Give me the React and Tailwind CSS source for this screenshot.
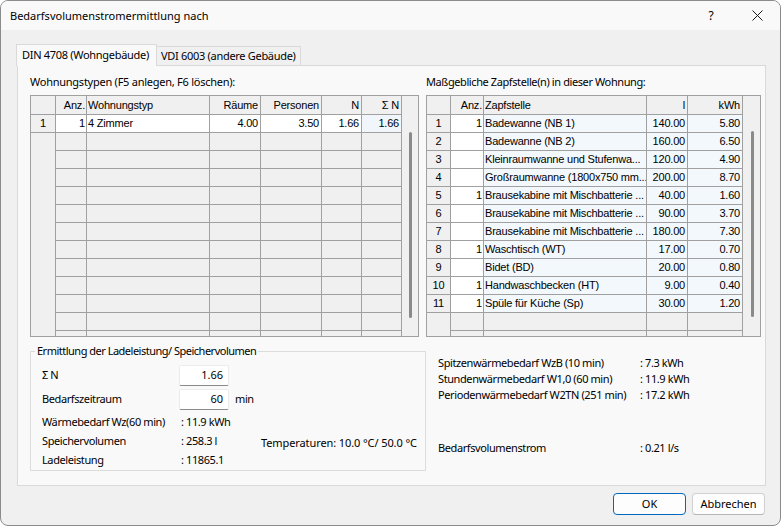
import React from "react";

const UI = { fontFamily: '"Noto Sans", "Open Sans", sans-serif' };
const GRIDF = { fontFamily: '"Liberation Sans", Arial, sans-serif' };

const LCOLS = [
  { w: "w-[25px]", a: "justify-center", label: "" },
  { w: "w-[31px]", a: "justify-end pr-[1px]", label: "Anz." },
  { w: "w-[123px]", a: "justify-start pl-[1px]", label: "Wohnungstyp" },
  { w: "w-[51px]", a: "justify-end pr-[2px]", label: "Räume" },
  { w: "w-[61px]", a: "justify-end pr-[2px]", label: "Personen" },
  { w: "w-[40px]", a: "justify-end pr-[2px]", label: "N" },
  { w: "w-[40px]", a: "justify-end pr-[2px]", label: "Σ N" },
];

const RCOLS = [
  { w: "w-[24px]", a: "justify-center", label: "" },
  { w: "w-[33px]", a: "justify-end pr-[1px]", label: "Anz." },
  { w: "w-[163px]", a: "justify-start pl-[1px]", label: "Zapfstelle" },
  { w: "w-[41px]", a: "justify-end pr-[2px]", label: "l" },
  { w: "w-[55px]", a: "justify-end pr-[2px]", label: "kWh" },
];

const LROWS = [["1", "1", "4 Zimmer", "4.00", "3.50", "1.66", "1.66"]];
const LBG = ["bg-[#f0f0f0]", "bg-white", "bg-white", "bg-white", "bg-white", "bg-white", "bg-[#f1f6fc]"];

const RROWS = [
  ["1", "1", "Badewanne (NB 1)", "140.00", "5.80"],
  ["2", "", "Badewanne (NB 2)", "160.00", "6.50"],
  ["3", "", "Kleinraumwanne und Stufenwa...", "120.00", "4.90"],
  ["4", "", "Großraumwanne (1800x750 mm...", "200.00", "8.70"],
  ["5", "1", "Brausekabine mit Mischbatterie ...", "40.00", "1.60"],
  ["6", "", "Brausekabine mit Mischbatterie ...", "90.00", "3.70"],
  ["7", "", "Brausekabine mit Mischbatterie ...", "180.00", "7.30"],
  ["8", "1", "Waschtisch (WT)", "17.00", "0.70"],
  ["9", "", "Bidet (BD)", "20.00", "0.80"],
  ["10", "1", "Handwaschbecken (HT)", "9.00", "0.40"],
  ["11", "1", "Spüle für Küche (Sp)", "30.00", "1.20"],
];
const RBG = ["bg-[#f0f0f0]", "bg-white", "bg-[#f3f8fd]", "bg-[#f3f8fd]", "bg-[#f3f8fd]"];

function Grid({ cols, rows, bgs, width, scrollW, thumbPad }) {
  const total = 13;
  const all = [];
  for (let i = 0; i < total; i++) all.push(rows[i] || null);
  return (
    <div className={`${width} h-[242px] border border-[#a0a0a0] flex overflow-hidden bg-[#f0f0f0] tracking-[-0.2px]`} style={GRIDF}>
      <div className="flex flex-col">
        <div className="flex h-[19px] shrink-0">
          {cols.map((c, i) => (
            <div
              key={i}
              className={`${c.w} h-[19px] border-r border-b border-[#a0a0a0] flex items-center ${c.a} text-[11px] text-black bg-[#f0f0f0] whitespace-nowrap overflow-hidden`}
            >
              {c.label}
            </div>
          ))}
        </div>
        {all.map((r, ri) => (
          <div key={ri} className="flex h-[18px] shrink-0">
            {cols.map((c, i) => {
              const isHdr = i === 0;
              const border = isHdr
                ? r
                  ? "border-r border-b border-[#a0a0a0]"
                  : "border-r border-r-[#a0a0a0]"
                : "border-r border-b border-[#a0a0a0]";
              const bg = r ? bgs[i] : "bg-[#f0f0f0]";
              return (
                <div
                  key={i}
                  className={`${c.w} h-[18px] ${border} ${bg} flex items-center ${c.a} text-[11px] text-black whitespace-nowrap overflow-hidden`}
                >
                  {r ? r[i] : ""}
                </div>
              );
            })}
          </div>
        ))}
      </div>
      <div className={`${scrollW} h-full ${thumbPad}`}>
        <div className="w-[3px] h-[186px] bg-[#8a8a8a] rounded-[2px]" />
      </div>
    </div>
  );
}

export default function App() {
  return (
    <div className="w-[781px] h-[526px] bg-[#f0f0f0] border border-[#8b8b8b] rounded-[8px] overflow-hidden flex flex-col text-black whitespace-nowrap text-[11px] tracking-[-0.4px]" style={UI}>
      {/* Title bar */}
      <div className="h-[29px] shrink-0 bg-[#f9f9f9] flex items-center justify-between tracking-normal">
        <div className="pl-[9px] leading-[16px]">Bedarfsvolumenstromermittlung nach</div>
        <div className="flex h-full">
          <div className="w-[46px] h-full flex items-center justify-center text-[12px]">?</div>
          <div className="w-[46px] h-full flex items-center justify-center">
            <svg width="11" height="11" viewBox="0 0 11 11">
              <path d="M0.5 0.5 L10.5 10.5 M10.5 0.5 L0.5 10.5" stroke="#1a1a1a" strokeWidth="1" fill="none" />
            </svg>
          </div>
        </div>
      </div>

      {/* Tabs */}
      <div className="pt-[13px] pl-[15px] flex items-end h-[35px] shrink-0 tracking-[-0.3px]">
        <div className="w-[141px] h-[22px] border-t border-l border-r border-[#d9d9d9] bg-[#f9f9f9] flex items-center pl-[5px] relative z-10 -mb-px pb-[1px]">
          DIN 4708 (Wohngebäude)
        </div>
        <div className="w-[144px] h-[19px] border-t border-r border-[#d9d9d9] bg-[#f0f0f0] flex items-center pl-[4px]">
          VDI 6003 (andere Gebäude)
        </div>
      </div>

      {/* Panel */}
      <div className="ml-[16px] w-[749px] h-[421px] shrink-0 border border-[#d9d9d9] bg-[#f9f9f9] pl-[12px] pt-[8px] flex flex-col">
        <div className="flex">
          <div className="w-[396px] flex flex-col">
            <div className="h-[21px] leading-[16px] tracking-[-0.25px]">Wohnungstypen (F5 anlegen, F6 löschen):</div>
            <Grid cols={LCOLS} rows={LROWS} bgs={LBG} width="w-[389px]" scrollW="w-[16px]" thumbPad="pl-[7px] pt-[36px]" />
          </div>
          <div className="w-[335px] flex flex-col">
            <div className="h-[21px] leading-[16px]">Maßgebliche Zapfstelle(n) in dieser Wohnung:</div>
            <Grid cols={RCOLS} rows={RROWS} bgs={RBG} width="w-[335px]" scrollW="w-[17px]" thumbPad="pl-[8px] pt-[35px]" />
          </div>
        </div>

        <div className="flex mt-[6px]">
          <fieldset className="w-[396px] h-[128px] border border-[#dcdcdc] pl-[11px] pt-[6px] m-0">
            <legend className="ml-[-7px] px-[2px] leading-[16px] tracking-[-0.5px]">Ermittlung der Ladeleistung/ Speichervolumen</legend>
            <div className="flex flex-col">
              <div className="flex items-center h-[21px]">
                <div className="w-[137px]">Σ N</div>
                <div className="w-[50px] h-[21px] bg-white border border-[#ececec] border-b-[#8a8a8a] rounded-[2px] flex items-center justify-end pr-[5px] tracking-normal">1.66</div>
              </div>
              <div className="flex items-center h-[21px] mt-[3px]">
                <div className="w-[137px]">Bedarfszeitraum</div>
                <div className="w-[50px] h-[21px] bg-white border border-[#ececec] border-b-[#8a8a8a] rounded-[2px] flex items-center justify-end pr-[5px] tracking-normal">60</div>
                <div className="pl-[6px]">min</div>
              </div>
              <div className="flex items-center h-[19px] mt-[3px]">
                <div className="w-[137px]">Wärmebedarf Wz(60 min)</div>
                <div className="pl-[2px]">: 11.9 kWh</div>
              </div>
              <div className="flex items-center h-[19px]">
                <div className="w-[137px]">Speichervolumen</div>
                <div className="w-[82px] pl-[2px]">: 258.3 l</div>
                <div className="pt-[3px] tracking-[-0.1px]">Temperaturen: 10.0 °C/ 50.0 °C</div>
              </div>
              <div className="flex items-center h-[19px]">
                <div className="w-[137px]">Ladeleistung</div>
                <div className="pl-[2px]">: 11865.1</div>
              </div>
            </div>
          </fieldset>
          <div className="flex flex-col pl-[12px] pt-[12px]">
            <div className="flex items-center h-[16px]">
              <div className="w-[202px]">Spitzenwärmebedarf WzB (10 min)</div>
              <div>: 7.3 kWh</div>
            </div>
            <div className="flex items-center h-[16px]">
              <div className="w-[202px]">Stundenwärmebedarf W1,0 (60 min)</div>
              <div>: 11.9 kWh</div>
            </div>
            <div className="flex items-center h-[16px]">
              <div className="w-[202px]">Periodenwärmebedarf W2TN (251 min)</div>
              <div>: 17.2 kWh</div>
            </div>
            <div className="flex items-center h-[16px] mt-[37px]">
              <div className="w-[202px]">Bedarfsvolumenstrom</div>
              <div>: 0.21 l/s</div>
            </div>
          </div>
        </div>
      </div>

      {/* Buttons */}
      <div className="flex justify-end gap-[6px] pr-[15px] pt-[7px] tracking-normal">
        <div className="w-[73px] h-[22px] border border-[#0067c0] rounded-[4px] bg-[#fdfdfd] flex items-center justify-center">OK</div>
        <div className="w-[73px] h-[22px] border border-[#d0d0d0] border-b-[#b5b5b5] rounded-[4px] bg-[#fdfdfd] flex items-center justify-center">Abbrechen</div>
      </div>
    </div>
  );
}
